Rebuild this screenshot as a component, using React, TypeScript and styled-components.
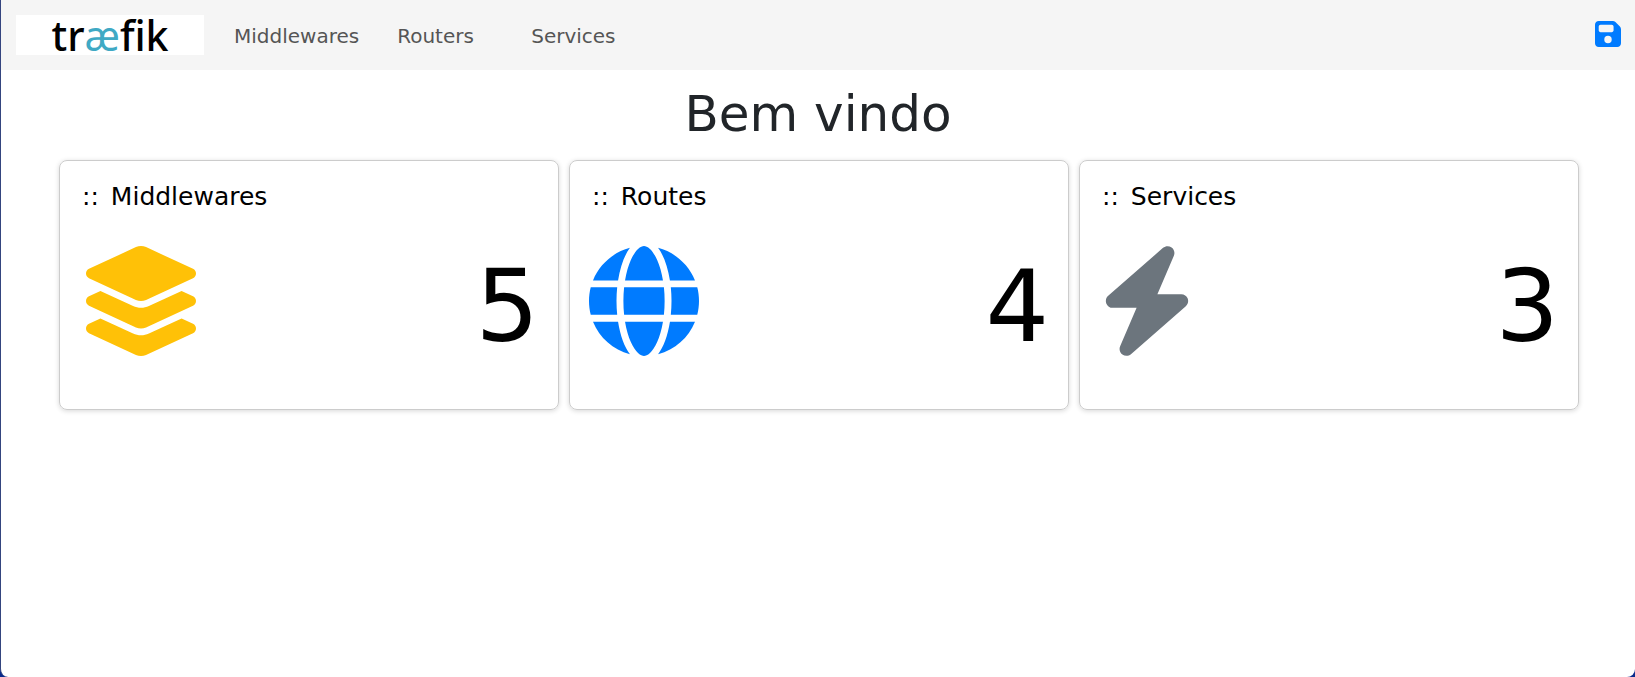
import React from "react";
import styled, { createGlobalStyle } from "styled-components";
import { FaBolt, FaFloppyDisk, FaGlobe, FaLayerGroup } from "react-icons/fa6";
import type { IconType } from "react-icons";

const GlobalStyle = createGlobalStyle`
  * { box-sizing: border-box; }
  body {
    margin: 0;
    background: #0a2a8c;
    font-family: Verdana, "DejaVu Sans", sans-serif;
  }
`;

const Page = styled.div`
  min-height: 100vh;
  background: #fff;
  border-left: 1px solid #34457f;
  border-radius: 0 0 8px 8px;
`;

const Header = styled.header`
  display: flex;
  align-items: center;
  height: 70px;
  padding: 0 14px 0 15px;
  background: #f5f5f5;
`;

const Logo = styled.a`
  display: flex;
  align-items: center;
  justify-content: center;
  width: 188px;
  height: 40px;
  background: #fff;
  color: #000;
  font: 500 41px/40px "Noto Sans", sans-serif;
  text-decoration: none;
`;

const LogoAccent = styled.span`
  color: #3fa9c4;
  font-weight: 400;
`;

const Nav = styled.nav`
  display: flex;
  flex: 1;
  gap: 38px;
  margin-left: 30px;
  padding-top: 2px;
`;

const NavLink = styled.a`
  min-width: 96px;
  color: #555;
  font-size: 20px;
  line-height: 30px;
  text-decoration: none;
`;

const SaveButton = styled.button`
  display: flex;
  padding: 0;
  margin-bottom: 2px;
  border: 0;
  background: none;
  color: #007bff;
  cursor: pointer;

  svg {
    width: 26px;
    height: 30px;
  }
`;

const Title = styled.h1`
  margin: 0;
  padding: 14px 0 16px;
  color: #212529;
  font-size: 50px;
  font-weight: 400;
  line-height: 60px;
  text-align: center;
`;

const Cards = styled.main`
  display: grid;
  grid-template-columns: repeat(3, 1fr);
  gap: 10px;
  padding: 0 56px 0 58px;
`;

const Card = styled.a`
  min-height: 250px;
  padding: 20px 19px;
  border: 1px solid #ccc;
  border-radius: 8px;
  box-shadow: 0 1px 5px rgba(0, 0, 0, 0.16);
  color: #000;
  text-decoration: none;
`;

const CardTitle = styled.h2`
  display: flex;
  gap: 12px;
  margin: 0;
  padding-left: 3px;
  font-size: 25px;
  font-weight: 400;
  line-height: 32px;
`;

const CardBody = styled.div`
  display: flex;
  align-items: flex-start;
  justify-content: space-between;
  margin-top: 33px;
`;

const CardIcon = styled.span<{ $color: string; $width: number }>`
  display: flex;
  color: ${({ $color }) => $color};

  svg {
    width: ${({ $width }) => $width}px;
    height: 110px;
  }
`;

const Count = styled.span`
  font-size: 100px;
  line-height: 122px;
`;

interface Summary {
  title: string;
  count: number;
  color: string;
  icon: IconType;
  iconWidth: number;
}

const summaries: Summary[] = [
  { title: "Middlewares", count: 5, color: "#ffc107", icon: FaLayerGroup, iconWidth: 124 },
  { title: "Routes", count: 4, color: "#007bff", icon: FaGlobe, iconWidth: 110 },
  { title: "Services", count: 3, color: "#6c757d", icon: FaBolt, iconWidth: 96 },
];

export default function App() {
  return (
    <>
      <GlobalStyle />
      <Page>
        <Header>
          <Logo href="#">
            tr<LogoAccent>æ</LogoAccent>fik
          </Logo>
          <Nav>
            <NavLink href="#middlewares">Middlewares</NavLink>
            <NavLink href="#routers">Routers</NavLink>
            <NavLink href="#services">Services</NavLink>
          </Nav>
          <SaveButton type="button" aria-label="Salvar">
            <FaFloppyDisk />
          </SaveButton>
        </Header>
        <Title>Bem vindo</Title>
        <Cards>
          {summaries.map(({ title, count, color, icon: Icon, iconWidth }) => (
            <Card key={title} href={`#${title.toLowerCase()}`}>
              <CardTitle>
                <span>::</span>
                <span>{title}</span>
              </CardTitle>
              <CardBody>
                <CardIcon $color={color} $width={iconWidth}>
                  <Icon />
                </CardIcon>
                <Count>{count}</Count>
              </CardBody>
            </Card>
          ))}
        </Cards>
      </Page>
    </>
  );
}
